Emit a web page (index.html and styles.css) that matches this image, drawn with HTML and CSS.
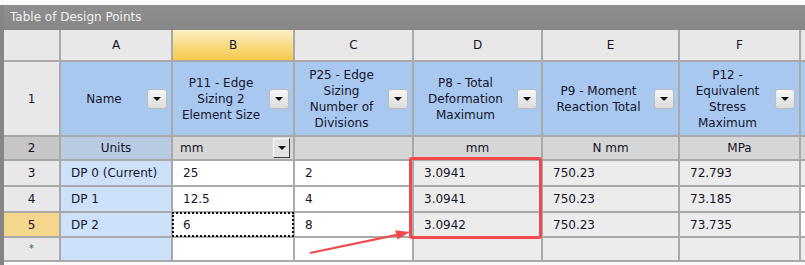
FILE: index.html
```html
<!DOCTYPE html>
<html lang="en">

<head>
    <meta charset="UTF-8">
    <title>Table of Design Points</title>
    <link rel="stylesheet" href="styles.css">
</head>

<body>
    <div class="panel">
        <div class="title">Table of Design Points</div>
        <div class="grid">
            <!-- column letters -->
            <div class="cell corner"></div>
            <div class="cell colhead">A</div>
            <div class="cell colhead active">B</div>
            <div class="cell colhead">C</div>
            <div class="cell colhead">D</div>
            <div class="cell colhead">E</div>
            <div class="cell colhead">F</div>
            <div class="cell colhead"></div>

            <!-- parameter names -->
            <div class="cell rowhead">1</div>
            <div class="cell param"><span class="label">Name</span><span class="drop"></span></div>
            <div class="cell param"><span class="label">P11 - Edge<br>Sizing 2<br>Element Size</span><span class="drop"></span></div>
            <div class="cell param"><span class="label">P25 - Edge<br>Sizing<br>Number of<br>Divisions</span><span class="drop"></span></div>
            <div class="cell param"><span class="label">P8 - Total<br>Deformation<br>Maximum</span><span class="drop"></span></div>
            <div class="cell param"><span class="label">P9 - Moment<br>Reaction Total</span><span class="drop"></span></div>
            <div class="cell param"><span class="label">P12 -<br>Equivalent<br>Stress<br>Maximum</span><span class="drop"></span></div>
            <div class="cell param"></div>

            <!-- units -->
            <div class="cell rowhead units-head">2</div>
            <div class="cell units name-units">Units</div>
            <div class="cell units unit-pick"><span class="label">mm</span><span class="pick"></span></div>
            <div class="cell units"></div>
            <div class="cell units">mm</div>
            <div class="cell units">N mm</div>
            <div class="cell units">MPa</div>
            <div class="cell units"></div>

            <div class="cell rowhead">3</div>
            <div class="cell name">DP 0 (Current)</div>
            <div class="cell input">25</div>
            <div class="cell input">2</div>
            <div class="cell output">3.0941</div>
            <div class="cell output">750.23</div>
            <div class="cell output">72.793</div>
            <div class="cell output"></div>

            <div class="cell rowhead">4</div>
            <div class="cell name">DP 1</div>
            <div class="cell input">12.5</div>
            <div class="cell input">4</div>
            <div class="cell output">3.0941</div>
            <div class="cell output">750.23</div>
            <div class="cell output">73.185</div>
            <div class="cell input"></div>

            <div class="cell rowhead current">5</div>
            <div class="cell name">DP 2</div>
            <div class="cell input selected">6</div>
            <div class="cell input">8</div>
            <div class="cell output">3.0942</div>
            <div class="cell output">750.23</div>
            <div class="cell output">73.735</div>
            <div class="cell input"></div>

            <div class="cell rowhead star">*</div>
            <div class="cell name"></div>
            <div class="cell input"></div>
            <div class="cell input"></div>
            <div class="cell output"></div>
            <div class="cell output"></div>
            <div class="cell output"></div>
            <div class="cell output"></div>
        </div>

        <!-- annotation over the deformation results -->
        <div class="highlight"></div>
        <svg class="arrow" width="805" height="260" viewBox="0 0 805 260">
            <line x1="310" y1="248" x2="398" y2="229.6" stroke="#f04a4f" stroke-width="2.2" />
            <polygon points="410,227 395.2,225.2 397.4,234.6" fill="#f04a4f" />
        </svg>
    </div>
</body>

</html>
```

FILE: styles.css
```css
body {
    margin: 0;
    background: #fafafa;
    font-family: "DejaVu Sans", Verdana, sans-serif;
    font-size: 12px;
    color: #15152a;
}

.panel {
    position: relative;
    margin-top: 5px;
    width: 805px;
    height: 260px;
    overflow: hidden;
    border-left: 4px solid #858585;
    box-sizing: border-box;
}

.title {
    height: 25px;
    line-height: 25px;
    padding-left: 6px;
    background: linear-gradient(#8e8e8e, #878787);
    color: #f2f2f2;
}

.grid {
    display: grid;
    grid-template-columns: 55px 110px 120px 117px 127px 135px 119px 40px;
    grid-template-rows: 30px 73px 22px 24px 24px 23px 22px;
    gap: 2px;
    padding-bottom: 2px;
    background: #a9a9a9;
    width: max-content;
}

.cell {
    display: flex;
    align-items: center;
    justify-content: center;
    line-height: 16px;
    white-space: nowrap;
}

.corner,
.colhead,
.rowhead {
    background: #e8e8e8;
}

.colhead.active {
    background: linear-gradient(#fcefc4, #f5c94a);
}

.rowhead.current {
    background: #f4d68c;
}

.rowhead.units-head {
    background: #c6c6c6;
}

.rowhead.star {
    color: #555;
    font-size: 10px;
}

.param {
    background: #a8c8f0;
}

.param .label {
    flex: 1;
    text-align: center;
}

.drop {
    flex: none;
    width: 20px;
    height: 20px;
    margin-right: 4px;
    box-sizing: border-box;
    border: 1px solid #bdbdbd;
    border-radius: 3px;
    background: linear-gradient(#f7f7f7, #dcdcdc);
    display: flex;
    align-items: center;
    justify-content: center;
}

.drop::before,
.pick::before {
    content: "";
    border-left: 4px solid transparent;
    border-right: 4px solid transparent;
    border-top: 4px solid #111;
}

.units {
    background: #d6d6d6;
}

.units.name-units {
    background: #b9cbe2;
}

.unit-pick {
    justify-content: flex-start;
    padding-left: 7px;
}

.unit-pick .label {
    flex: 1;
}

.pick {
    flex: none;
    width: 17px;
    height: 20px;
    margin-right: 3px;
    box-sizing: border-box;
    border: 1px solid;
    border-color: #fff #3c3c3c #3c3c3c #fff;
    background: #e2e2e2;
    display: flex;
    align-items: center;
    justify-content: center;
}

.name,
.input,
.output {
    justify-content: flex-start;
    padding-left: 10px;
}

.name {
    background: #cde1fb;
}

.input {
    background: #fff;
}

.output {
    background: #ececec;
}

.selected {
    outline: 2px dotted #111;
    outline-offset: -1px;
}

.highlight {
    position: absolute;
    left: 405px;
    top: 152px;
    width: 133px;
    height: 82px;
    box-sizing: border-box;
    border: 3px solid #f04a4f;
    border-radius: 3px;
}

.arrow {
    position: absolute;
    left: -4px;
    top: 0;
    pointer-events: none;
}
```
